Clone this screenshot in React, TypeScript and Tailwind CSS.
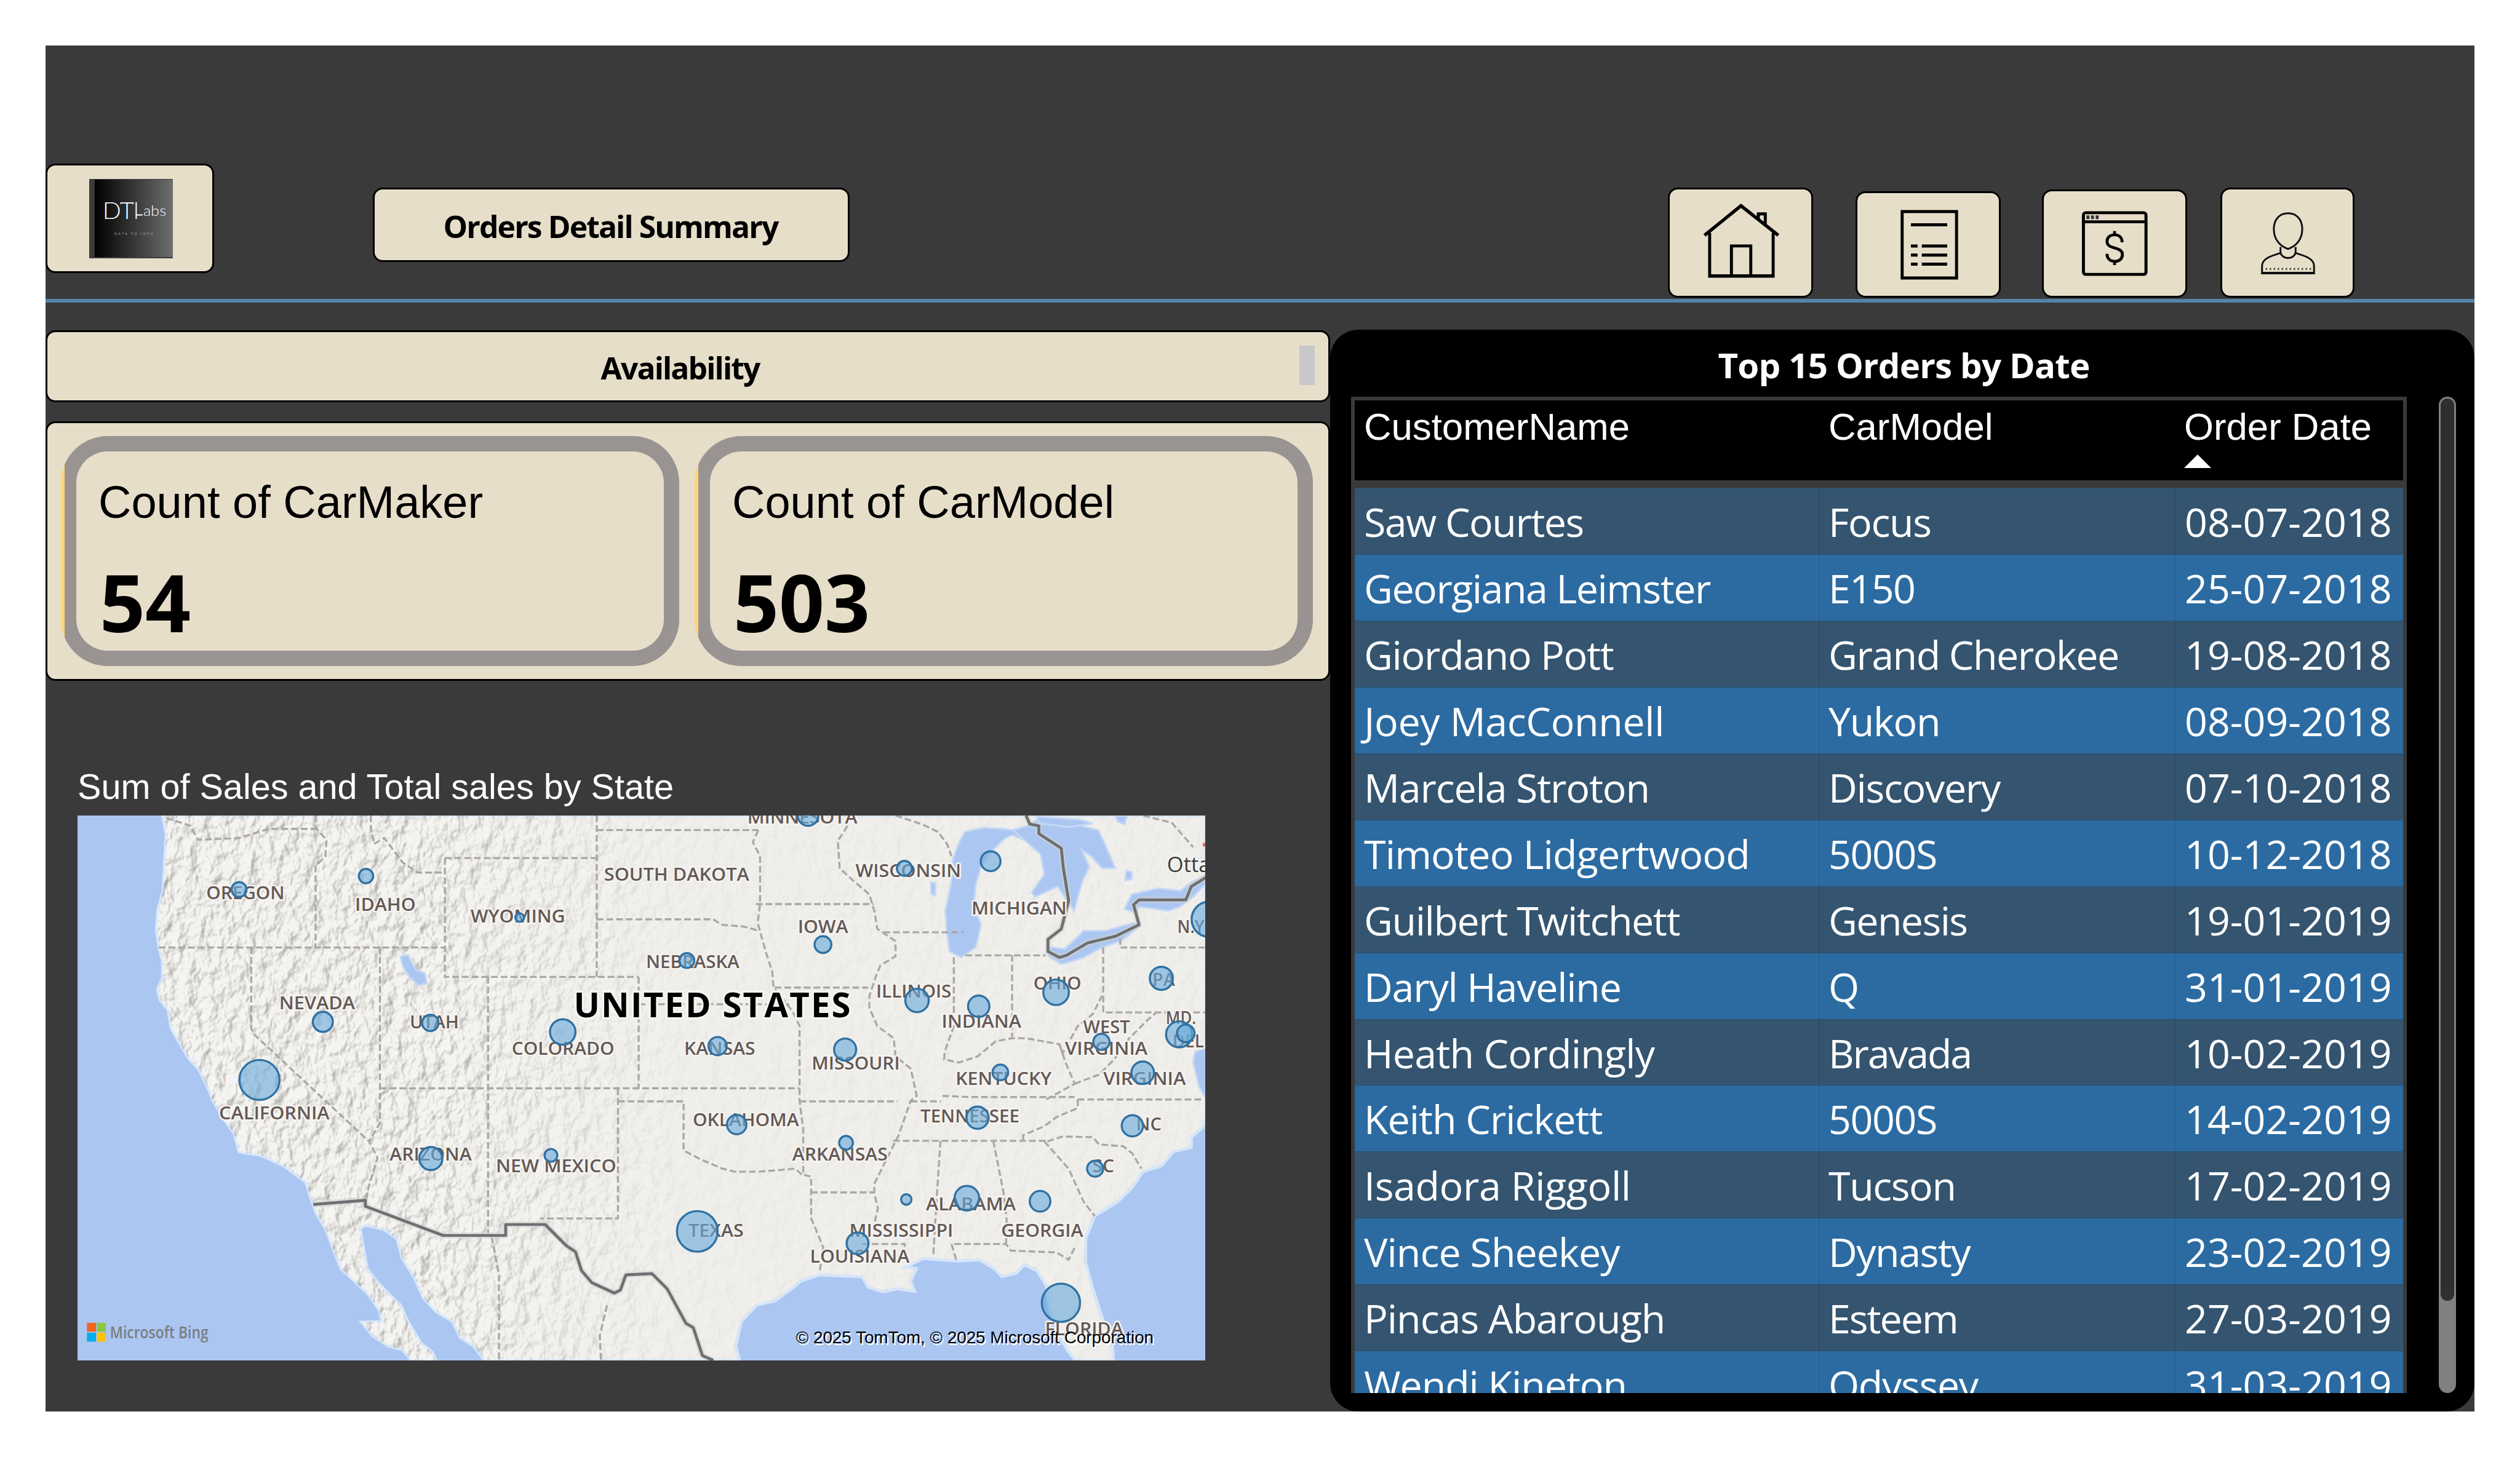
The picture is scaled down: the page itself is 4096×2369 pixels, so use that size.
import React from "react";

/* customer / model carry their own tracking in px */
type Order = { customer: string; ct: number; model: string; mt: number; date: string };

const orders: Order[] = [
  { customer: "Saw Courtes", ct: -1.5, model: "Focus", mt: -1.3, date: "08-07-2018" },
  { customer: "Georgiana Leimster", ct: -1.5, model: "E150", mt: -1.5, date: "25-07-2018" },
  { customer: "Giordano Pott", ct: -1.3, model: "Grand Cherokee", mt: -1.5, date: "19-08-2018" },
  { customer: "Joey MacConnell", ct: -0.35, model: "Yukon", mt: -1.3, date: "08-09-2018" },
  { customer: "Marcela Stroton", ct: -1.15, model: "Discovery", mt: -1.3, date: "07-10-2018" },
  { customer: "Timoteo Lidgertwood", ct: -0.8, model: "5000S", mt: -1.4, date: "10-12-2018" },
  { customer: "Guilbert Twitchett", ct: -1.4, model: "Genesis", mt: -1.6, date: "19-01-2019" },
  { customer: "Daryl Haveline", ct: -1.2, model: "Q", mt: 0, date: "31-01-2019" },
  { customer: "Heath Cordingly", ct: -0.75, model: "Bravada", mt: -2.2, date: "10-02-2019" },
  { customer: "Keith Crickett", ct: -1, model: "5000S", mt: -1.4, date: "14-02-2019" },
  { customer: "Isadora Riggoll", ct: -0.37, model: "Tucson", mt: -1.4, date: "17-02-2019" },
  { customer: "Vince Sheekey", ct: -0.95, model: "Dynasty", mt: -1.5, date: "23-02-2019" },
  { customer: "Pincas Abarough", ct: -1, model: "Esteem", mt: -2, date: "27-03-2019" },
  { customer: "Wendi Kineton", ct: -1.05, model: "Odyssey", mt: -1.3, date: "31-03-2019" },
];

/* ---------- map data: [text, left, baseline, width] ---------- */
const stateLabels: [string, number, number, number][] = [
  ["OREGON", 340, 1481, 129],
  ["IDAHO", 585, 1500, 100],
  ["WYOMING", 775, 1519, 156],
  ["NEVADA", 460, 1662, 125],
  ["UTAH", 675, 1694, 81],
  ["COLORADO", 843, 1737, 169],
  ["SOUTH DAKOTA", 995, 1450, 239],
  ["MINNESOTA", 1231, 1356, 181],
  ["WISCONSIN", 1409, 1444, 174],
  ["MICHIGAN", 1600, 1506, 157],
  ["IOWA", 1314, 1537, 83],
  ["NEBRASKA", 1064, 1594, 154],
  ["N.Y.", 1939, 1537, 52],
  ["ILLINOIS", 1443, 1643, 124],
  ["OHIO", 1702, 1630, 79],
  ["PA", 1898, 1624, 37],
  ["MD.", 1920, 1687, 50],
  ["INDIANA", 1551, 1693, 131],
  ["WEST", 1784, 1702, 77],
  ["VIRGINIA", 1754, 1737, 136],
  ["DEL", 1931, 1725, 52],
  ["KANSAS", 1127, 1737, 117],
  ["MISSOURI", 1337, 1762, 145],
  ["CALIFORNIA", 361, 1844, 182],
  ["ARIZONA", 642, 1912, 135],
  ["NEW MEXICO", 817, 1931, 198],
  ["KENTUCKY", 1574, 1787, 158],
  ["VIRGINIA", 1817, 1787, 136],
  ["OKLAHOMA", 1141, 1855, 175],
  ["TENNESSEE", 1516, 1849, 163],
  ["NC", 1871, 1862, 42],
  ["ARKANSAS", 1305, 1912, 157],
  ["SC", 1799, 1931, 36],
  ["ALABAMA", 1525, 1994, 148],
  ["TEXAS", 1134, 2037, 91],
  ["MISSISSIPPI", 1399, 2037, 171],
  ["GEORGIA", 1649, 2037, 135],
  ["LOUISIANA", 1334, 2080, 164],
  ["FLORIDA", 1721, 2199, 129],
];

/* [cx, cy, r] */
const bubbles: [number, number, number][] = [
  [394, 1465, 12.3], [603, 1442.7, 11.8], [856, 1511, 7], [532, 1683, 16.5],
  [709, 1684.7, 13.5], [927, 1699.7, 21], [1331, 1343, 17], [1489.6, 1430, 12.3],
  [1631.6, 1418.3, 16.3], [1355.5, 1555.7, 13.8], [1131.4, 1582, 12.2], [1991.5, 1514, 29],
  [1510.4, 1647.7, 19.3], [1612, 1657.3, 17.6], [1739.4, 1634.3, 21], [1912.7, 1611.3, 19],
  [1942, 1703.7, 21.5], [1953, 1702, 14.5], [1814, 1716, 13.3], [1182, 1723, 15],
  [1392, 1728.7, 18.2], [427.6, 1778.7, 33], [709.8, 1908.3, 19], [907.6, 1903, 10.5],
  [1647.6, 1766.3, 12.8], [1882, 1767, 18.6], [1213.5, 1852.3, 16], [1610, 1841, 18.3],
  [1865, 1854.3, 17.5], [1393.5, 1882.3, 11.3], [1803.7, 1925, 13.2], [1492.7, 1975.7, 8.6],
  [1592.5, 1973.7, 20.3], [1713, 1978.7, 17], [1148.6, 2028.3, 33.5], [1412.5, 2048, 18],
  [1747.4, 2146, 31.5],
];

const LAND =
  "M268 1343L274 1373L271 1427L269 1467L260 1500L258 1533L262 1560L268 1583L268 1610L260 1630L264 1647L277 1663L282 1693L299 1723L311 1743L329 1763L345 1797L351 1813L369 1843L386 1867L394 1897L430 1903L467 1920L504 1947L511 1970L522 2000L538 2027L550 2060L562 2090L584 2110L608 2133L626 2160L629 2177L596 2178L614 2200L639 2217L663 2223L678 2241L718 2241L712 2227L694 2213L672 2177L660 2150L639 2130L620 2110L605 2090L599 2057L593 2023L602 2018L633 2025L654 2040L663 2073L682 2103L697 2137L718 2160L746 2177L758 2203L780 2217L798 2241L1218 2241L1212 2217L1221 2177L1246 2150L1276 2143L1304 2123L1319 2110L1350 2100L1393 2102L1420 2103L1430 2120L1454 2128L1478 2123L1506 2127L1500 2110L1509 2090L1491 2087L1521 2073L1576 2077L1613 2075L1638 2090L1650 2103L1674 2097L1687 2083L1708 2093L1723 2117L1726 2137L1730 2160L1748 2207L1760 2227L1772 2241L1834 2241L1831 2207L1815 2170L1800 2123L1788 2080L1788 2040L1803 2003L1840 1980L1864 1957L1882 1930L1913 1920L1932 1897L1962 1890L1962 1873L1981 1857L1986 1840L1986 1343Z";

const LAKES = [
  "M1589 1370L1619 1363L1653 1365L1668 1367L1693 1360L1690 1385L1668 1375L1656 1380L1632 1403L1616 1427L1607 1457L1604 1493L1616 1523L1607 1560L1583 1577L1564 1567L1559 1533L1557 1500L1567 1453L1570 1413L1580 1387Z",
  "M1668 1367L1693 1360L1708 1350L1754 1358L1779 1360L1809 1367L1821 1393L1837 1430L1815 1430L1797 1410L1782 1400L1794 1427L1782 1453L1769 1500L1760 1487L1742 1460L1705 1477L1699 1470L1720 1440L1714 1407L1687 1383Z",
  "M1852 1497L1864 1473L1907 1463L1944 1467L1962 1453L1986 1441L1986 1455L1965 1477L1944 1493L1925 1500L1876 1493L1870 1503Z",
  "M1723 1568L1730 1560L1754 1563L1785 1533L1821 1533L1867 1520L1878 1525L1846 1550L1815 1560L1785 1577L1748 1588L1730 1577Z",
  "M1968 1733L1986 1725L1986 1810L1975 1790L1965 1750Z",
  "M660 1575L672 1573L685 1597L700 1603L703 1620L690 1623L675 1610L663 1590Z",
  "M1838 1344L1856 1343L1852 1358L1840 1352Z",
  "M1855 1434L1864 1436L1864 1448L1853 1450Z",
  "M1533 1453L1541 1455L1540 1475L1534 1472Z",
  "M1708 1345L1780 1350L1800 1356L1760 1362L1712 1356Z",
];

const STATE_LINES = [
  "M274 1347L314 1360L326 1383L394 1380L443 1365L522 1365",
  "M520 1343V1363L538 1383L536 1410L520 1427V1560",
  "M611 1343V1363L616 1390L633 1380L663 1420L688 1437H733",
  "M733 1413H983M733 1413V1609H1052M983 1343V1609",
  "M262 1560.5H733",
  "M414 1560V1693L418 1703L608 1880",
  "M626 1560V1850L608 1880L622 1907L606 1960L603 1980",
  "M804 1609V2035M626 1792.5H1317M1052 1609V1793",
  "M1052 1654H1300M983 1367H1249M983 1514H1175L1188 1523L1225 1526L1247 1532",
  "M1249 1367L1240 1387L1252 1410V1489L1248 1520L1262 1570L1272 1600L1274 1626L1305 1665L1317 1690V1814L1323 1860V1935L1336 1938V2007L1350 2040L1356 2055L1350 2095",
  "M1245 1489H1439M1276 1626.5H1430",
  "M1396 1360L1380 1385L1383 1430L1405 1450L1432 1473L1440 1500L1445 1530L1475 1550V1575L1450 1590L1442 1610L1432 1640V1660L1445 1690L1472 1710L1475 1740L1500 1760L1510 1805L1500 1813L1480 1870L1470 1890L1450 1930L1440 1950V1965L1446 1990L1441 2012",
  "M1455 1535.5H1587M1475 1343L1520 1358L1545 1370L1560 1390L1567 1410",
  "M1571 1577V1690L1556 1732L1555 1745L1580 1750L1610 1740L1640 1715L1667 1710L1690 1710L1745 1720L1750 1735L1775 1690L1800 1670L1815 1640",
  "M1590 1573.5H1722M1667 1573V1708M1817 1560V1667.5H1986M1845 1545V1560.5H1986",
  "M1745 1720L1755 1750L1770 1785L1725 1810L1720 1806",
  "M1552 1805L1600 1807H1770M1775 1811H1982M1317 1814H1478M1500 1814H1550",
  "M1018 1793V2007H890M1018 1814H1126V1895L1155 1910L1190 1925L1210 1930L1250 1930L1310 1925L1323 1937",
  "M1336 1964H1440M1471 1879H1725",
  "M1549 1879L1543 1970L1537 2070M1636 1879L1653 1965L1658 2010L1657 2049",
  "M1575 2075L1567 2049H1657L1665 2060L1740 2063L1760 2075L1770 2055M1420 2049H1490V2070",
  "M1720 1880L1760 1925L1785 1980L1803 2003",
  "M1725 1880L1750 1872L1800 1873L1810 1885L1850 1888L1865 1900L1880 1925",
  "M1775 1811V1825L1740 1840L1720 1855L1685 1870V1880",
  "M1770 1785L1810 1770L1835 1745L1860 1710L1890 1680L1905 1667",
  "M1883 1343L1930 1355L1965 1395",
  "M810 2037L822 2100V2241M1000 2150L988 2200L990 2241",
];

const COUNTRY_LINES = [
  "M516 1984L602 1977V1987L730 2035H833V2017H898L933 2052L948 2062L958 2093L975 2113L1012 2130L1022 2125L1031 2100L1074 2098L1099 2123L1130 2180L1142 2187L1157 2233L1175 2241",
  "M1690 1343L1696 1357L1711 1360V1373L1748 1397L1751 1427L1760 1483L1748 1530L1726 1547V1567L1745 1577L1757 1573L1791 1553L1837 1542L1876 1523L1867 1490L1876 1482H1953L1962 1460L1986 1445",
];

function SalesMap() {
  return (
    <svg className="block h-[886px] w-[1833px]" viewBox="128 1343 1857 898" preserveAspectRatio="none">
      <defs>
        <clipPath id="land">
          <path d={LAND} />
        </clipPath>
        <linearGradient id="fade" gradientUnits="userSpaceOnUse" x1="700" y1="0" x2="1130" y2="0">
          <stop offset="0" stopColor="#fff" />
          <stop offset="1" stopColor="#1c1c1c" />
        </linearGradient>
        <mask id="west" maskUnits="userSpaceOnUse" x="128" y="1343" width="1857" height="898">
          <rect x="128" y="1343" width="1857" height="898" fill="url(#fade)" />
        </mask>
        <filter id="relief" x="0" y="0" width="1" height="1" colorInterpolationFilters="sRGB">
          <feTurbulence type="fractalNoise" baseFrequency="0.05 0.038" numOctaves="3" seed="8" result="n" />
          <feDiffuseLighting in="n" surfaceScale="8" lightingColor="#f5f3ee" diffuseConstant="1.16">
            <feDistantLight azimuth="215" elevation="60" />
          </feDiffuseLighting>
        </filter>
      </defs>
      <rect x="128" y="1343" width="1857" height="898" fill="#abc6f1" />
      <path d={LAND} fill="#f0efeb" stroke="#d6e6f8" strokeWidth="5" />
      <g clipPath="url(#land)">
        <g mask="url(#west)">
          <rect x="128" y="1343" width="1857" height="898" filter="url(#relief)" opacity="0.34" />
        </g>
      </g>
      <g fill="#abc6f1" stroke="#c4d8f5" strokeWidth="3">
        {LAKES.map((d) => (
          <path key={d} d={d} />
        ))}
      </g>
      <g fill="none" stroke="#aaa8a4" strokeWidth="3.4" strokeDasharray="11 5">
        {STATE_LINES.map((d) => (
          <path key={d} d={d} />
        ))}
      </g>
      <g fill="none" strokeLinejoin="round">
        {COUNTRY_LINES.map((d) => (
          <path key={d} d={d} stroke="#d5d4d0" strokeOpacity="0.6" strokeWidth="10" />
        ))}
        {COUNTRY_LINES.map((d) => (
          <path key={d + "c"} d={d} stroke="#6d7073" strokeWidth="4.8" />
        ))}
      </g>
      <path d="M1981 1388h5v6h-5z" fill="#e06a6a" />
      <g
        fill="#645957"
        stroke="#f6f4f0"
        strokeWidth="5"
        strokeLinejoin="round"
        fontSize="29.5"
        fontWeight="600"
        style={{ paintOrder: "stroke", fontFamily: "'Open Sans','Noto Sans',sans-serif" }}
      >
        {stateLabels.map(([t, x, y, w]) => (
          <text key={t + x} x={x} y={y} textLength={w} lengthAdjust="spacingAndGlyphs">
            {t}
          </text>
        ))}
        <text x="1922" y="1436" fontSize="35" fontWeight="500" fill="#3d3d3d">
          Ottawa
        </text>
        <text x="945" y="1675" fontSize="57" fontWeight="700" fill="#000" strokeWidth="7" textLength="456" lengthAdjust="spacing">
          UNITED STATES
        </text>
      </g>
      <g fill="#6aabdc" fillOpacity="0.62" stroke="#2f71a3" strokeWidth="3.4">
        {bubbles.map(([x, y, r]) => (
          <circle key={`${x}-${y}`} cx={x} cy={y} r={r} />
        ))}
      </g>
      <path d="M143.5 2179h15v14.7h-15z" fill="#f26522" />
      <path d="M159.7 2179h15v14.7h-15z" fill="#8dc73f" />
      <path d="M143.5 2195.3h15v14.7h-15z" fill="#00aeef" />
      <path d="M159.7 2195.3h15v14.7h-15z" fill="#ffc20f" />
      <text x="181.5" y="2204.5" fontSize="27" fontWeight="600" fill="#7a7d84" textLength="162" lengthAdjust="spacingAndGlyphs" style={{ fontFamily: "'Open Sans',sans-serif" }}>
        Microsoft Bing
      </text>
      <text
        className="[text-shadow:2px_3px_0_#fff]"
        x="1311"
        y="2213"
        fontSize="28"
        fill="#000"
        textLength="589"
        lengthAdjust="spacingAndGlyphs"
        style={{ fontFamily: "'Liberation Sans',Arial,sans-serif" }}
      >
        © 2025 TomTom, © 2025 Microsoft Corporation
      </text>
    </svg>
  );
}

const cardClass = "shrink-0 rounded-[16px] border-[3px] border-black bg-[#e6dec9]";

function HomeIcon() {
  return (
    <svg className="block h-full w-full" viewBox="2751 312 233 176" fill="none" stroke="#000" strokeWidth="5">
      <path d="M2816.5 384V455H2921.5V384M2814 455.5H2924" />
      <path d="M2852.5 455V405.5H2884.5V455" />
      <path d="M2808 388L2868.3 339L2930 388" strokeWidth="5.5" />
      <path d="M2897 362V352.5H2908.5V370" />
    </svg>
  );
}

function ListIcon() {
  return (
    <svg className="block h-full w-full" viewBox="3060 318 233 170" fill="none" stroke="#000" strokeWidth="5">
      <path d="M3133.5 348.5H3223.5V458.5H3133.5Z" />
      <path d="M3148 370.5H3208M3148 405.5H3159M3166 405.5H3208M3148 420.5H3159M3166 420.5H3208M3148 435.5H3159M3166 435.5H3208" />
    </svg>
  );
}

function PaymentIcon() {
  return (
    <svg className="block h-full w-full" viewBox="3366 315 233 173" fill="none" stroke="#000" strokeWidth="5">
      <rect x="3431" y="350.5" width="103.5" height="102" rx="4" />
      <path d="M3430 365.5H3535" />
      <path d="M3438.5 355v6M3446 355v6M3453.7 355v6" strokeWidth="5" stroke="#333" />
      <path
        d="M3482.5 381v7M3482.5 430v7M3495 399.5c0-8-5-12.500-12.500-12.500s-12.500 4.500-12.500 11c0 14 25.500 8 25.500 21.500 0 7-5 11.500-12.500 11.500s-13-4.500-13-12.500"
        strokeWidth="4.8"
      />
    </svg>
  );
}

function PersonIcon() {
  return (
    <svg className="block h-full w-full" viewBox="3659.5 312 215 176" fill="none" stroke="#111" strokeWidth="3">
      <path d="M3768 351.5c-14 0-23.500 10-23.500 26 0 17 10 28 23.500 33 13.500-5 23.500-16 23.500-33 0-16-9.500-26-23.500-26Z" />
      <path d="M3755.5 407v8c0 6 6 10.500 12.500 10.500s12.500-4.500 12.500-10.500v-8" />
      <path d="M3755 417.5c-14 4-30 9-30 21V451H3811V438.500c0-12-16-17-30-21" />
      <path d="M3724 450H3812" strokeWidth="3.5" />
      <path d="M3731 443.5H3807" strokeDasharray="2.5 4.1" strokeWidth="3" stroke="#444" />
    </svg>
  );
}

function Logo() {
  return (
    <svg className="block h-[129px] w-[136px]" viewBox="147 294 138 131" preserveAspectRatio="none">
      <defs>
        <linearGradient id="logo" x1="0" x2="1">
          <stop offset="0" stopColor="#000" />
          <stop offset="1" stopColor="#6e6e6e" />
        </linearGradient>
      </defs>
      <rect x="147" y="294" width="138" height="131" fill="#3c3c3c" />
      <rect x="156" y="295" width="129" height="128" fill="url(#logo)" />
      <g fill="#fff" style={{ fontFamily: "Lato,sans-serif" }} fontWeight="300">
        <text x="169" y="360" fontSize="38" textLength="52" lengthAdjust="spacingAndGlyphs">
          DT
        </text>
        <text x="236" y="354.5" fontSize="23" textLength="38" lengthAdjust="spacingAndGlyphs">
          abs
        </text>
        <text x="188.5" y="386.5" fontSize="5.5" textLength="64" fontWeight="400" fill="#aaa">
          DATA TO INFO
        </text>
      </g>
      <path d="M224.5 332V360M224 353.5H235" stroke="#fff" strokeWidth="2" fill="none" />
      <path d="M199 333v3M219 333v3" stroke="#fff" strokeWidth="1" fill="none" />
    </svg>
  );
}

function Stat({ label, value }: { label: string; value: string }) {
  return (
    <div className="h-[374px] w-[1005px] rounded-[76px] bg-[linear-gradient(to_right,#ffd574_6px,#999492_6px)] p-[25px]">
      <div className="flex h-full flex-col rounded-[51px] bg-[#e6dec9] pl-[36px] pt-[41px] text-black">
        <div className="whitespace-nowrap font-['Liberation_Sans',Arial,sans-serif] text-[74px] leading-[84px]">{label}</div>
        <div className="ml-[2px] mt-[44px] font-['Open_Sans','Noto_Sans',sans-serif] text-[129.5px] font-bold leading-[150px]">{value}</div>
      </div>
    </div>
  );
}

function OrdersTable() {
  return (
    <div className="h-[1620px] w-[1716px] overflow-hidden border-x-[6px] border-t-[6px] border-[#3a3a3a] text-white">
      <div className="grid h-[142px] grid-cols-[755px_579px_370px] border-b-[12px] border-[#3a3a3a] bg-black pt-[7px] font-['Liberation_Sans',Arial,sans-serif] text-[61.7px] leading-[71px]">
        <div className="pl-[15px]">CustomerName</div>
        <div className="pl-[15px]">CarModel</div>
        <div className="pl-[14px]">
          <div className="whitespace-nowrap">Order Date</div>
          <svg className="mt-[10px] block h-[22px] w-[44px]" viewBox="0 0 44 22">
            <path d="M22 0L44 22H0Z" fill="#fff" />
          </svg>
        </div>
      </div>
      {orders.map((o) => (
        <div
          key={o.customer}
          className="grid h-[107.95px] grid-cols-[755px_579px_370px] whitespace-nowrap border-t border-[#28506f] font-['Open_Sans','Noto_Sans',sans-serif] text-[64.5px] leading-[108px] even:bg-[#34546f] odd:bg-[#2b6ba2]"
        >
          <div className="border-r border-black/15 pl-[15px]" style={{ letterSpacing: o.ct }}>{o.customer}</div>
          <div className="border-r border-black/15 pl-[15px]" style={{ letterSpacing: o.mt }}>{o.model}</div>
          <div className="pl-[15px]">{o.date}</div>
        </div>
      ))}
    </div>
  );
}

export default function App() {
  return (
    <div className="h-[2369px] w-[4096px] overflow-hidden bg-white p-[74px]">
      <main className="flex h-[2221px] w-[3948px] flex-col overflow-hidden bg-[#3a3a3a]">
        <header className="flex h-[418px] shrink-0 items-end border-b-[6px] border-[#5584a9]">
          <div className={`${cardClass} mb-[42px] flex h-[178px] w-[274px] items-center justify-center pl-[4px]`}>
            <Logo />
          </div>
          <h1 className={`${cardClass} mb-[60px] ml-[258px] flex h-[121px] w-[775px] items-center justify-center whitespace-nowrap pr-[2px] pt-[6px] font-['Open_Sans','Noto_Sans',sans-serif] text-[49.8px] font-bold leading-none tracking-[-1.9px] text-black`}>
            Orders Detail Summary
          </h1>
          <nav className="ml-[1330px] flex items-end pb-[2px]">
            <div className={`${cardClass} h-[179px] w-[236px]`}>
              <HomeIcon />
            </div>
            <div className={`${cardClass} ml-[69px] h-[173px] w-[236px]`}>
              <ListIcon />
            </div>
            <div className={`${cardClass} ml-[67px] h-[176px] w-[236px]`}>
              <PaymentIcon />
            </div>
            <div className={`${cardClass} ml-[54px] h-[179px] w-[218px]`}>
              <PersonIcon />
            </div>
          </nav>
        </header>

        <div className="flex min-h-0 flex-1">
          <section className="w-[2088px] shrink-0 pt-[45px]">
            <div className={`${cardClass} flex h-[117px] items-center pr-[22px]`}>
              <h2 className="flex-1 pr-[3px] pt-[7px] text-center font-['Open_Sans','Noto_Sans',sans-serif] text-[49.8px] font-bold leading-none tracking-[-1.85px] text-black">
                Availability
              </h2>
              <div className="-ml-[25px] mb-[3px] h-[64px] w-[25px] bg-[#c8c8c8]" />
            </div>

            <div className={`${cardClass} mt-[31px] flex h-[422px] gap-[25px] pl-[22px] pt-[21px]`}>
              <Stat label="Count of CarMaker" value="54" />
              <Stat label="Count of CarModel" value="503" />
            </div>

            <div className="ml-[52px] mt-[139px]">
              <h2 className="h-[80px] whitespace-nowrap font-['Liberation_Sans',Arial,sans-serif] text-[57.6px] leading-[66px] text-white">
                Sum of Sales and Total sales by State
              </h2>
              <SalesMap />
            </div>
          </section>

          <section className="mt-[44px] flex h-[1759px] w-[1860px] flex-col rounded-[46px] bg-black pl-[34px]">
            <h2 className="h-[109px] pr-[29px] text-center font-['Open_Sans','Noto_Sans',sans-serif] text-[56.4px] font-bold leading-[115px] tracking-[-0.8px] text-white">
              Top 15 Orders by Date
            </h2>
            <div className="flex">
              <OrdersTable />
              <div className="ml-[52px] h-[1620px] w-[28px] rounded-full bg-[#808080] p-[3px]">
                <div className="h-[1467px] rounded-full bg-[#2f2f2f]" />
              </div>
            </div>
          </section>
        </div>
      </main>
    </div>
  );
}
